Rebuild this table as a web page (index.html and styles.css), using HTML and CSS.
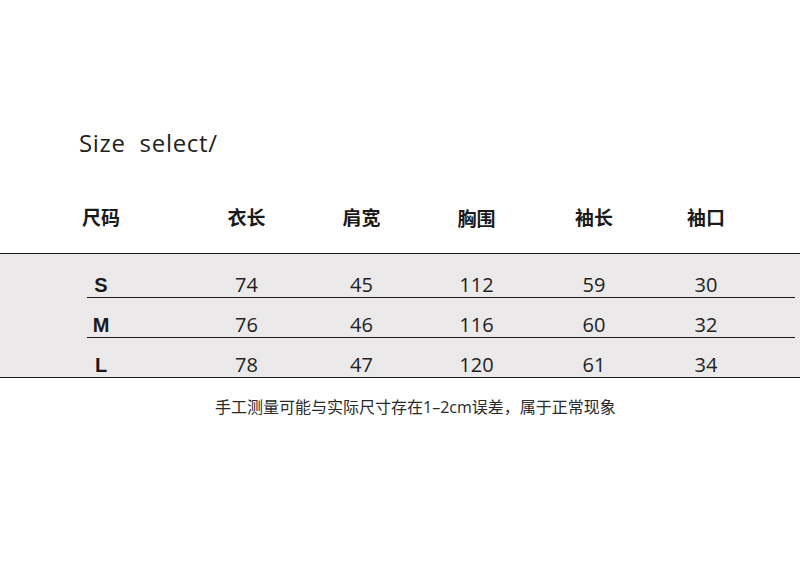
FILE: index.html
```
<!DOCTYPE html>
<html lang="zh-CN">
<head>
<meta charset="utf-8">
<title>Size select</title>
<link rel="stylesheet" href="styles.css">
</head>
<body>
<main class="page">
  <h1 class="title">Size&nbsp; select/</h1>
  <div class="grid head">
    <div class="label">尺码</div>
    <div>衣长</div>
    <div>肩宽</div>
    <div class="low">胸围</div>
    <div>袖长</div>
    <div>袖口</div>
  </div>
  <section class="band">
    <div class="grid row">
      <div class="label size">S</div>
      <div>74</div><div>45</div><div>112</div><div>59</div><div>30</div>
    </div>
    <div class="grid row">
      <div class="label size">M</div>
      <div>76</div><div>46</div><div>116</div><div>60</div><div>32</div>
    </div>
    <div class="grid row last">
      <div class="label size">L</div>
      <div>78</div><div>47</div><div>120</div><div>61</div><div>34</div>
    </div>
  </section>
  <p class="note">手工测量可能与实际尺寸存在1–2cm误差，属于正常现象</p>
</main>
</body>
</html>
```

FILE: styles.css
```
* { box-sizing: border-box; }
html, body { margin: 0; padding: 0; background: #fff; }
body {
  width: 800px;
  height: 567px;
  overflow: hidden;
  color: #1f1f1f;
  font-family: "Open Sans", "Noto Sans CJK SC", sans-serif;
}
.page { padding-top: 128px; }
.title {
  margin: 0 0 0 79px;
  font-family: "Open Sans", sans-serif;
  font-weight: 400;
  font-size: 24px;
  line-height: 30px;
  letter-spacing: 0.7px;
  color: #222;
}
.grid {
  display: grid;
  grid-template-columns: 102px 115px 115px 115px 120px 104px;
  justify-items: center;
  margin-left: 87px;
  width: 708px;
}
.label {
  justify-self: start;
  width: 28px;
  display: flex;
  justify-content: center;
  white-space: nowrap;
}
.head {
  margin-top: 45px;
  font-family: "Noto Sans CJK SC", sans-serif;
  font-weight: 700;
  font-size: 19px;
  line-height: 28px;
  color: #1a1a1a;
}
.head .low { position: relative; top: 1px; }
.band {
  margin-top: 22px;
  background: #ece9ea;
  border-top: 1px solid #1a1a1a;
  border-bottom: 1px solid #1a1a1a;
  padding-top: 4px;
}
.row {
  height: 40px;
  align-items: end;
  border-bottom: 1px solid #1a1a1a;
  font-size: 20px;
  line-height: 24px;
  color: #222;
}
.row.last { border-bottom: 0; height: 39px; }
.size {
  font-family: "Liberation Sans", Arial, sans-serif;
  font-weight: 700;
  font-size: 20px;
  color: #1a1a1a;
}
.note {
  margin: 18px 0 0 215px;
  font-size: 16px;
  line-height: 22px;
  color: #2a2a2a;
  white-space: nowrap;
}
```
